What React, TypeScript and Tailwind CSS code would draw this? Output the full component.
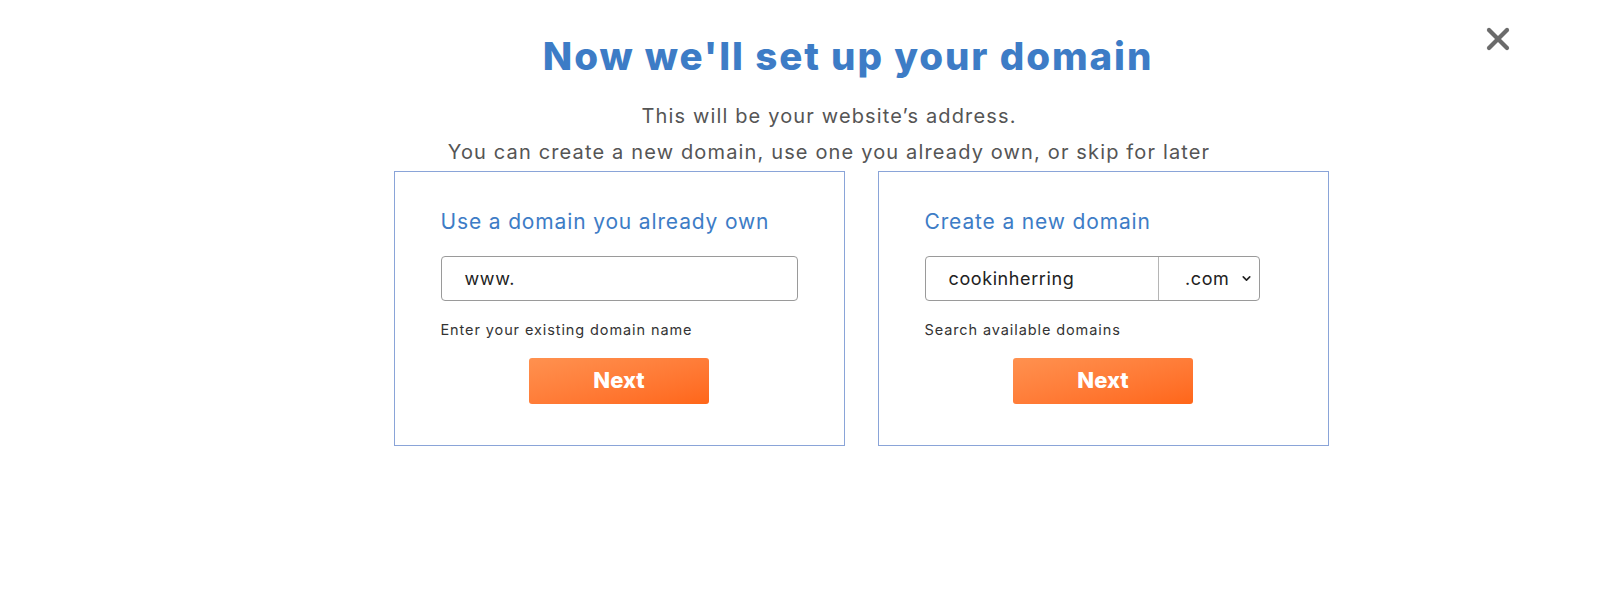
import { X, ChevronDown } from "lucide-react";

function NextButton() {
  return (
    <button
      type="button"
      className="mx-auto flex h-[46px] w-[180px] items-center justify-center rounded-[3px] bg-gradient-to-br from-[#ff914f] to-[#ff6618] text-[22px] font-extrabold text-white"
    >
      Next
    </button>
  );
}

export default function App() {
  return (
    <div className="relative h-[613px] w-full bg-white font-['Inter',sans-serif]">
      <button type="button" className="absolute right-[84px] top-[21px] text-[#6b6b6b]">
        <X size={36} strokeWidth={2.8} />
      </button>

      <div className="flex flex-col items-center pt-[32px]">
        <h1 className="ml-[96px] text-[38.5px] font-extrabold leading-[48px] tracking-[1.9px] text-[#3d7cc6]">
          Now we'll set up your domain
        </h1>
        <div className="ml-[58px] mt-[18px] text-center text-[20px] leading-[36px] tracking-[1.15px] text-[#555]">
          <p>This will be your website’s address.</p>
          <p>You can create a new domain, use one you already own, or skip for later</p>
        </div>

        <div className="ml-[122px] mt-[1px] flex gap-[33px]">
          <section className="h-[275px] w-[451px] border border-[#8aa4d8] px-[46px] pt-[34px]">
            <h2 className="text-[21px] leading-[32px] tracking-[0.85px] text-[#3d7cc6]">Use a domain you already own</h2>
            <div className="mt-[18px] flex h-[45px] w-[357px] items-center rounded-[4px] border border-[#9a9a9a] px-[23px] text-[18px] tracking-[0.6px] text-[#222]">
              www.
            </div>
            <p className="mt-[18px] text-[14.5px] tracking-[0.9px] text-[#333]">Enter your existing domain name</p>
            <div className="mt-[17px]">
              <NextButton />
            </div>
          </section>

          <section className="h-[275px] w-[451px] border border-[#8aa4d8] px-[46px] pt-[34px]">
            <h2 className="text-[21px] leading-[32px] tracking-[0.85px] text-[#3d7cc6]">Create a new domain</h2>
            <div className="mt-[18px] flex h-[45px] w-[335px] rounded-[4px] border border-[#9a9a9a] text-[18px] tracking-[0.6px] text-[#222]">
              <div className="flex w-[233px] items-center border-r border-[#b5b5b5] pl-[23px]">cookinherring</div>
              <div className="flex flex-1 items-center justify-end gap-[10px] pr-[6px]">
                <span>.com</span>
                <ChevronDown size={13} strokeWidth={3} />
              </div>
            </div>
            <p className="mt-[18px] text-[14.5px] tracking-[0.9px] text-[#333]">Search available domains</p>
            <div className="mt-[17px]">
              <NextButton />
            </div>
          </section>
        </div>
      </div>
    </div>
  );
}
